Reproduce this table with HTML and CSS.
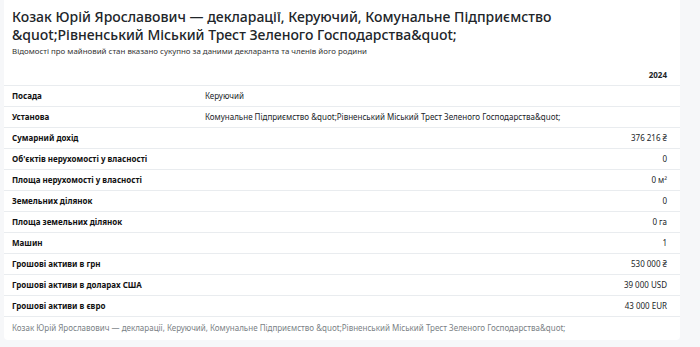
FILE: index.html
```html
<!DOCTYPE html>
<html lang="uk">
<head>
<meta charset="utf-8">
<title>Козак Юрій Ярославович — декларації</title>
<link rel="stylesheet" href="styles.css">
</head>
<body>
<div class="card">
  <div class="head">
    <h1 class="title">Козак Юрій Ярославович — декларації, Керуючий, Комунальне Підприємство &amp;quot;Рівненський Міський Трест Зеленого Господарства&amp;quot;</h1>
    <p class="sub">Відомості про майновий стан вказано сукупно за даними декларанта та членів його родини</p>
  </div>
  <table class="decl">
    <thead>
      <tr><th class="lbl"></th><th class="val"></th><th class="num">2024</th></tr>
    </thead>
    <tbody>
      <tr><td class="lbl">Посада</td><td class="val" colspan="2">Керуючий</td></tr>
      <tr><td class="lbl">Установа</td><td class="val" colspan="2">Комунальне Підприємство &amp;quot;Рівненський Міський Трест Зеленого Господарства&amp;quot;</td></tr>
      <tr><td class="lbl">Сумарний дохід</td><td class="val"></td><td class="num">376 216 ₴</td></tr>
      <tr><td class="lbl">Об'єктів нерухомості у власності</td><td class="val"></td><td class="num">0</td></tr>
      <tr><td class="lbl">Площа нерухомості у власності</td><td class="val"></td><td class="num">0 м²</td></tr>
      <tr><td class="lbl">Земельних ділянок</td><td class="val"></td><td class="num">0</td></tr>
      <tr><td class="lbl">Площа земельних ділянок</td><td class="val"></td><td class="num">0 га</td></tr>
      <tr><td class="lbl">Машин</td><td class="val"></td><td class="num">1</td></tr>
      <tr><td class="lbl">Грошові активи в грн</td><td class="val"></td><td class="num">530 000 ₴</td></tr>
      <tr><td class="lbl">Грошові активи в доларах США</td><td class="val"></td><td class="num">39 000 USD</td></tr>
      <tr><td class="lbl">Грошові активи в євро</td><td class="val"></td><td class="num">43 000 EUR</td></tr>
    </tbody>
    <tfoot>
      <tr><td class="foot" colspan="3">Козак Юрій Ярославович — декларації, Керуючий, Комунальне Підприємство &amp;quot;Рівненський Міський Трест Зеленого Господарства&amp;quot;</td></tr>
    </tfoot>
  </table>
</div>
</body>
</html>
```
FILE: styles.css
```css
html, body {
  margin: 0;
  padding: 0;
  background: #f6f7f9;
}
body {
  padding: 0 20px 0 4px;
  font-family: "Noto Sans", "Open Sans", "DejaVu Sans", sans-serif;
  color: #212529;
}
.card {
  background: #fff;
  border-radius: 0 0 4px 4px;
  padding-top: 8px;
  padding-bottom: 2px;
  width: 676px;
}
.head {
  padding: 0 8px;
}
.title {
  margin: 0;
  font-size: 14px;
  line-height: 18px;
  font-weight: 500;
  color: #212529;
}
.sub {
  margin: 0;
  padding-top: 1px;
  font-size: 7.9px;
  line-height: 12px;
  color: #333;
}
.decl {
  margin-top: 8px;
  width: 100%;
  border-collapse: collapse;
  font-size: 8px;
}
.decl th, .decl td {
  height: 20px;
  padding: 0 13px 0 8px;
  border-bottom: 1px solid #e9ecef;
  vertical-align: middle;
  line-height: 12px;
}
.decl th {
  font-weight: 700;
}
.lbl {
  width: 180px;
  text-align: left;
  font-weight: 700;
  color: #111;
}
.val {
  text-align: left;
  padding-left: 0 !important;
}
.num {
  text-align: right;
  white-space: nowrap;
}
.decl tfoot td {
  border-bottom: none;
  height: 21px;
}
.foot {
  color: #7a7f85;
}
```
